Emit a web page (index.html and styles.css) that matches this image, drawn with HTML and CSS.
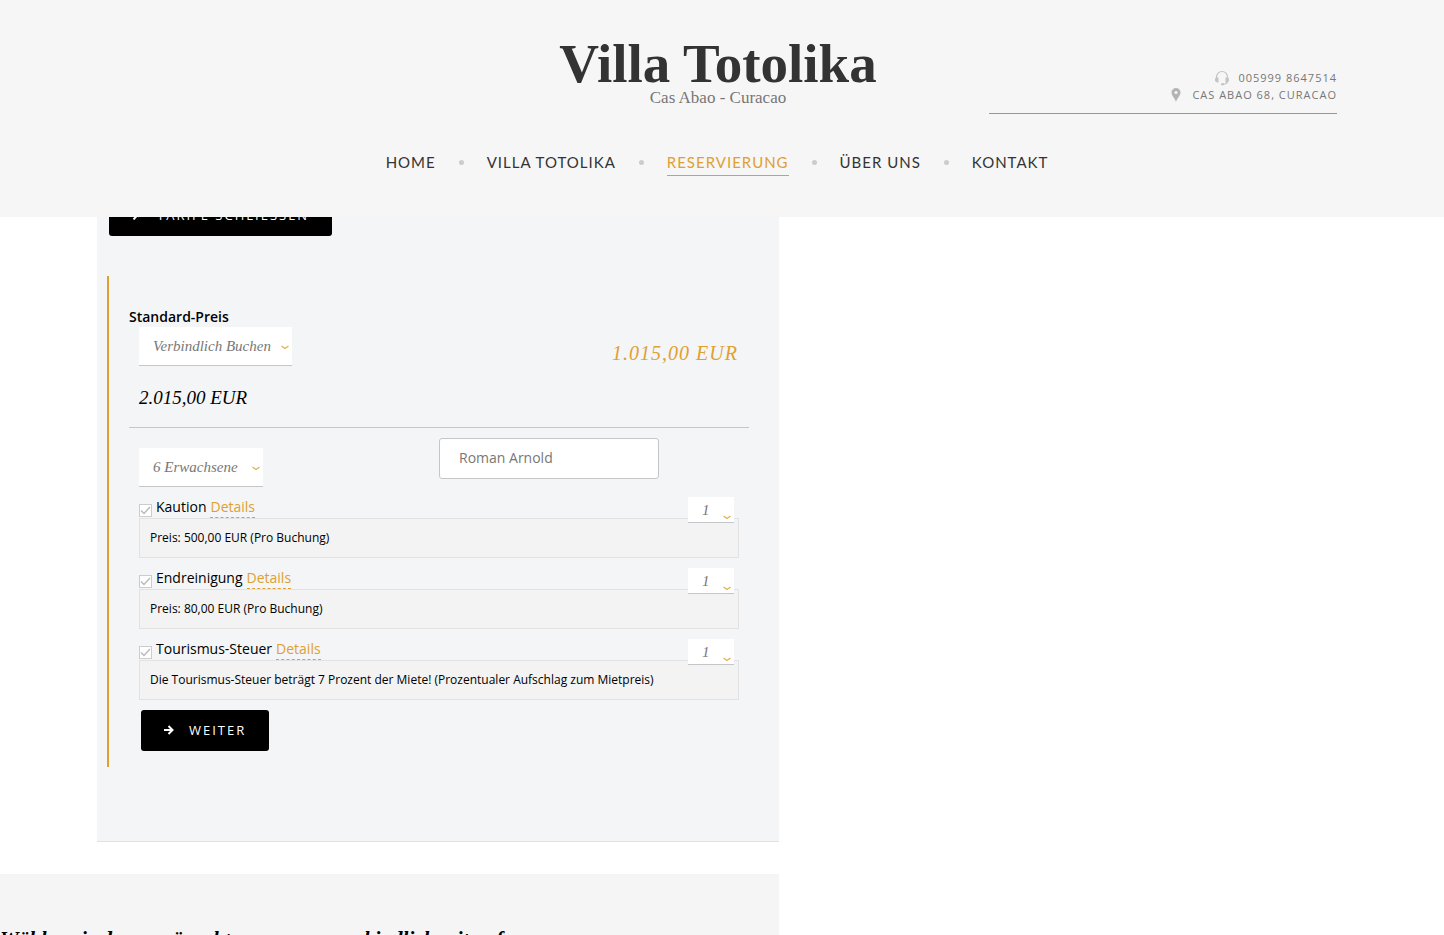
FILE: index.html
```html
<!DOCTYPE html>
<html lang="de">
<head>
    <meta charset="UTF-8">
    <meta name="viewport" content="width=device-width, initial-scale=1.0">
    <title>Villa Totolika - Reservierung</title>
    <link rel="stylesheet" href="styles.css">
</head>
<body>
    <header class="site-header">
        <div class="container header-top">
            <div class="brand">
                <h1 class="brand-name">Villa Totolika</h1>
                <p class="brand-tagline">Cas Abao - Curacao</p>
            </div>
            <div class="contact">
                <p class="contact-line">
                    <svg class="contact-icon" viewBox="0 0 16 16" width="16" height="16"><path d="M2.5 9V7a5.500 5.500 0 0 1 11 0v2M13.500 11c0 2-1.500 3.200-4.500 3.200" fill="none" stroke="#c4c4c4" stroke-width="1.200"/><path d="M2 7.500h2.500v5H3.500C2 12.500 1 11.500 1 10s.4-2 1-2.500zM14 7.500h-2.500v5h1c1.500 0 2.500-1 2.500-2.500s-.4-2-1-2.500zM7 13.200h3v2H7z" fill="#c4c4c4"/></svg>
                    005999 8647514
                </p>
                <p class="contact-line">
                    <svg class="contact-icon" viewBox="0 0 16 16" width="16" height="16"><path d="M8 1a4.500 4.500 0 0 0-4.500 4.500C3.500 8.500 6.800 11 8 15c1.200-4 4.500-6.500 4.500-9.500A4.500 4.500 0 0 0 8 1zm0 2.900a1.600 1.600 0 1 1 0 3.200 1.600 1.600 0 0 1 0-3.200z" fill="#b4b4b4"/></svg>
                    CAS ABAO 68, CURACAO
                </p>
            </div>
        </div>
        <nav class="main-nav">
            <a href="#">HOME</a>
            <span class="dot"></span>
            <a href="#">VILLA TOTOLIKA</a>
            <span class="dot"></span>
            <a href="#" class="active">RESERVIERUNG</a>
            <span class="dot"></span>
            <a href="#">ÜBER UNS</a>
            <span class="dot"></span>
            <a href="#">KONTAKT</a>
        </nav>
    </header>

    <main class="page">
        <div class="container">
            <div class="booking-panel">
                <button type="button" class="btn btn-close">
                    <svg viewBox="0 0 10 10" width="10" height="10"><path d="M1.500 9.500l4-4.500M2 2h6L6 7" fill="none" stroke="#fff" stroke-width="2"/></svg>
                    TARIFE SCHLIESSEN
                </button>

                <form class="rate">
                    <label class="rate-title" for="rateType">Standard-Preis</label>
                    <div class="rate-row">
                        <div class="select">
                            <select id="rateType" class="select-rate">
                                <option>Verbindlich Buchen</option>
                            </select>
                            <svg class="chevron" viewBox="0 0 8 5" width="8" height="5"><path d="M.5 1l3.500 2.500L7.500 1" fill="none" stroke="#e2b04f" stroke-width="1.300"/></svg>
                        </div>
                        <span class="rate-price">1.015,00 EUR</span>
                    </div>
                    <p class="rate-total">2.015,00 EUR</p>

                    <div class="guest-row">
                        <div class="select">
                            <select class="select-guests" aria-label="Erwachsene">
                                <option>6 Erwachsene</option>
                            </select>
                            <svg class="chevron" viewBox="0 0 8 5" width="8" height="5"><path d="M.5 1l3.500 2.500L7.500 1" fill="none" stroke="#e2b04f" stroke-width="1.300"/></svg>
                        </div>
                        <input type="text" class="guest-name" aria-label="Name" value="Roman Arnold">
                    </div>

                    <!-- Extras -->
                    <div class="extra">
                        <div class="extra-head">
                            <span class="check">
                                <input type="checkbox" id="deposit" checked>
                                <svg viewBox="0 0 13 13" width="13" height="13"><path d="M2 6.500l3 3L11 3" fill="none" stroke="#bbb" stroke-width="1.500"/></svg>
                            </span>
                            <label for="deposit">Kaution</label>
                            <a href="#" class="details">Details</a>
                        </div>
                        <p class="extra-text">Preis: 500,00 EUR (Pro Buchung)</p>
                        <div class="select quantity">
                            <select aria-label="Anzahl Kaution"><option>1</option></select>
                            <svg class="chevron" viewBox="0 0 8 5" width="8" height="5"><path d="M.5 1l3.500 2.500L7.500 1" fill="none" stroke="#e2b04f" stroke-width="1.300"/></svg>
                        </div>
                    </div>
                    <div class="extra">
                        <div class="extra-head">
                            <span class="check">
                                <input type="checkbox" id="cleaning" checked>
                                <svg viewBox="0 0 13 13" width="13" height="13"><path d="M2 6.500l3 3L11 3" fill="none" stroke="#bbb" stroke-width="1.500"/></svg>
                            </span>
                            <label for="cleaning">Endreinigung</label>
                            <a href="#" class="details">Details</a>
                        </div>
                        <p class="extra-text">Preis: 80,00 EUR (Pro Buchung)</p>
                        <div class="select quantity">
                            <select aria-label="Anzahl Endreinigung"><option>1</option></select>
                            <svg class="chevron" viewBox="0 0 8 5" width="8" height="5"><path d="M.5 1l3.500 2.500L7.500 1" fill="none" stroke="#e2b04f" stroke-width="1.300"/></svg>
                        </div>
                    </div>
                    <div class="extra">
                        <div class="extra-head">
                            <span class="check">
                                <input type="checkbox" id="tax" checked>
                                <svg viewBox="0 0 13 13" width="13" height="13"><path d="M2 6.500l3 3L11 3" fill="none" stroke="#bbb" stroke-width="1.500"/></svg>
                            </span>
                            <label for="tax">Tourismus-Steuer</label>
                            <a href="#" class="details">Details</a>
                        </div>
                        <p class="extra-text">Die Tourismus-Steuer beträgt 7 Prozent der Miete! (Prozentualer Aufschlag zum Mietpreis)</p>
                        <div class="select quantity">
                            <select aria-label="Anzahl Tourismus-Steuer"><option>1</option></select>
                            <svg class="chevron" viewBox="0 0 8 5" width="8" height="5"><path d="M.5 1l3.500 2.500L7.500 1" fill="none" stroke="#e2b04f" stroke-width="1.300"/></svg>
                        </div>
                    </div>

                    <button type="button" class="btn btn-next">
                        <svg viewBox="0 0 10 10" width="10" height="10"><path d="M0 5h8M4.500 1l4 4-4 4" fill="none" stroke="#fff" stroke-width="2"/></svg>
                        WEITER
                    </button>
                </form>
            </div>
        </div>

        <section class="intro">
            <p>Wählen sie den gewünschten raum, unverbindlich mit anfrage</p>
        </section>
    </main>
</body>
</html>
```
FILE: styles.css
```css
* {
    box-sizing: border-box;
}
body {
    margin: 0;
    height: 100vh;
    overflow: hidden;
    background: #fff;
    color: #000;
    font-family: "Open Sans", sans-serif;
    font-size: 14px;
    line-height: 20px;
}
h1, p {
    margin: 0;
}
a {
    text-decoration: none;
}
.container {
    max-width: 1250px;
    margin: 0 auto;
}

/* Header */
.site-header {
    position: fixed;
    top: 0;
    left: 0;
    z-index: 10;
    width: 100%;
    padding: 40px 0 41px;
    background: #f6f6f6;
}
.header-top {
    display: grid;
    grid-template-columns: 1fr 348px 1fr;
    padding: 0 10px;
}
.brand {
    grid-column: 2;
    padding-right: 8px;
    text-align: center;
    white-space: nowrap;
    font-family: "Liberation Serif", serif;
}
.brand-name {
    color: #333;
    font-size: 55px;
    line-height: 48px;
}
.brand-tagline {
    color: #777;
    font-size: 17px;
    line-height: 20px;
}
.contact {
    justify-self: end;
    width: 348px;
    height: 74px;
    padding-top: 29px;
    border-bottom: 1px solid #929a96;
    color: #777;
    font-size: 11px;
    line-height: 17px;
    letter-spacing: 1px;
}
.contact-line {
    display: flex;
    align-items: center;
    justify-content: flex-end;
    gap: 8px;
}
.main-nav {
    display: flex;
    justify-content: center;
    align-items: center;
    gap: 23px;
    margin-top: 35px;
    padding-right: 10px;
    font-family: Lato, sans-serif;
    font-size: 15px;
    line-height: 26px;
    letter-spacing: 1px;
}
.main-nav a {
    color: #333;
    border-bottom: 1px solid transparent;
}
.main-nav .active {
    color: #e0a030;
    border-color: #e0a030;
}
.dot {
    width: 5px;
    height: 5px;
    border-radius: 50%;
    background: #ccc;
}

/* Booking */
.page {
    padding-top: 195px;
}
.booking-panel {
    max-width: 682px;
    padding: 0 0 74px 10px;
    background: #f4f5f7;
    border-bottom: 1px solid #e2e2e2;
}
.btn {
    display: flex;
    align-items: center;
    gap: 15px;
    height: 41px;
    padding: 0 23px 1px;
    border: 0;
    border-radius: 3px;
    background: #000;
    color: #fff;
    font-family: "Open Sans", sans-serif;
    font-size: 13px;
    letter-spacing: 2px;
}
.btn-close {
    margin-left: 2px;
}
.btn-next {
    margin-left: 12px;
}
.rate {
    margin-top: 40px;
    padding: 31px 30px 16px 20px;
    border-left: 2px solid #e0a030;
}
.rate-title {
    display: block;
    font-weight: 600;
}
.rate-row {
    display: flex;
    justify-content: space-between;
    align-items: center;
    height: 52px;
    padding: 0 11px 0 10px;
}
.rate-row .select {
    align-self: flex-start;
}
.rate-price,
.rate-total {
    font-family: "Liberation Serif", serif;
    font-style: italic;
}
.rate-price {
    color: #e0a030;
    font-size: 20px;
    letter-spacing: 1px;
}
.rate-total {
    padding: 5px 0 15px 10px;
    border-bottom: 1px solid #c4c6c8;
    font-size: 19px;
    line-height: 28px;
}
.select {
    position: relative;
}
.select select {
    display: block;
    height: 39px;
    padding: 0 14px;
    border: 0;
    border-bottom: 1px solid #c4c6c8;
    border-radius: 0;
    background: #fff;
    color: #777;
    font-family: "Liberation Serif", serif;
    font-size: 15px;
    font-style: italic;
    appearance: none;
}
.chevron {
    position: absolute;
    right: 3px;
    top: 18px;
    pointer-events: none;
}
.select .select-rate {
    width: 153px;
}
.select .select-guests {
    width: 124px;
}
.guest-row {
    display: grid;
    grid-template-columns: 1fr 1fr;
    align-items: end;
    padding: 10px;
}
.guest-row .select {
    justify-self: start;
    margin-top: 10px;
}
.guest-name {
    align-self: start;
    width: 220px;
    height: 41px;
    padding: 0 19px 2px;
    border: 1px solid #c4c6c8;
    border-radius: 3px;
    background: #fff;
    color: #777;
    font-family: inherit;
    font-size: 14px;
}
.extra {
    position: relative;
    margin: 0 10px 10px;
}
.extra-head {
    display: flex;
    gap: 4px;
    height: 21px;
}
.check {
    position: relative;
    width: 13px;
    height: 13px;
    margin-top: 7px;
}
.check input {
    display: block;
    width: 13px;
    height: 13px;
    margin: 0;
    border: 1px solid #ccc;
    background: #fff;
    appearance: none;
}
.check svg {
    position: absolute;
    top: 0;
    left: 0;
    pointer-events: none;
}
.details {
    border-bottom: 1px dashed #e0a030;
    color: #e0a030;
}
.extra-text {
    padding: 9px 10px;
    border: 1px solid #e2e2e2;
    background: #f3f3f3;
    font-size: 12px;
}
.quantity {
    position: absolute;
    top: 0;
    right: 5px;
}
.quantity select {
    width: 46px;
    height: 26px;
}

/* Intro */
.intro {
    max-width: 779px;
    margin-top: 32px;
    padding: 51px 0;
    background: #f5f5f5;
    font-family: "Liberation Serif", serif;
    font-size: 21px;
    font-style: italic;
    font-weight: bold;
    line-height: 28px;
    white-space: nowrap;
}
```
